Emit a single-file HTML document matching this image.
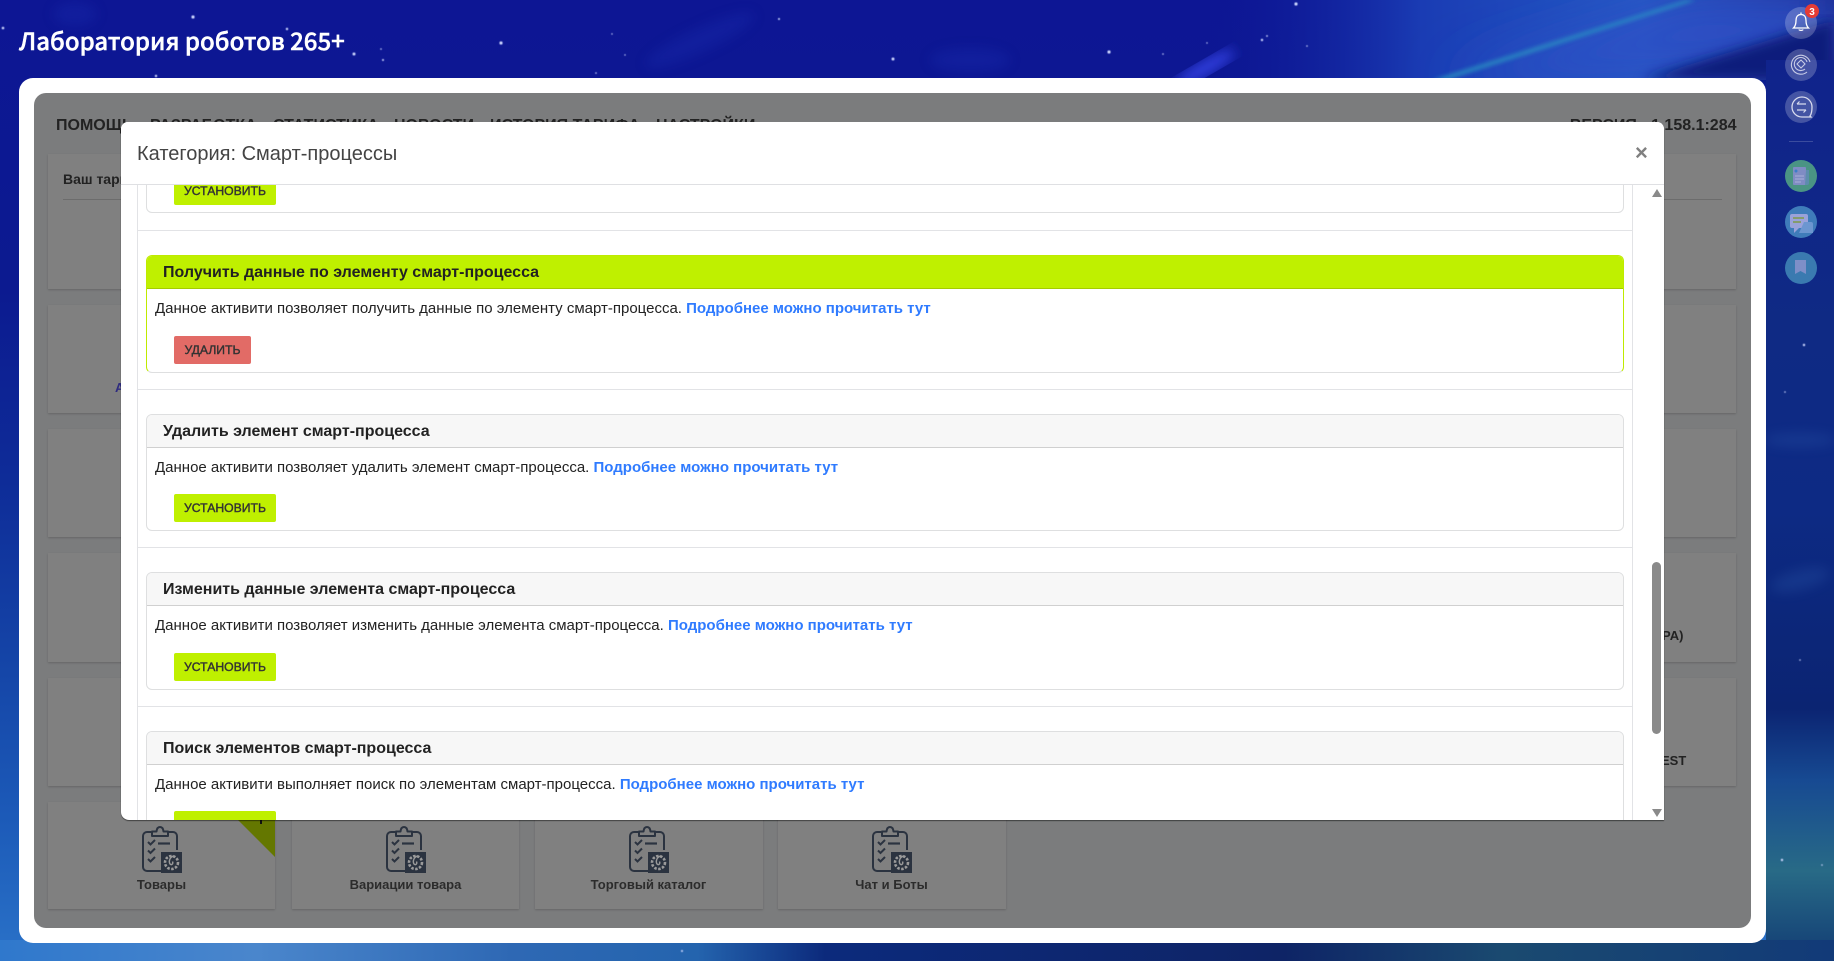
<!DOCTYPE html>
<html><head><meta charset="utf-8"><style>
html,body{margin:0;padding:0;width:1834px;height:961px;overflow:hidden;background:#0c1590;font-family:"Liberation Sans",sans-serif}
.a{position:absolute}
#bg{position:absolute;left:0;top:0}
#title{left:19px;top:22px;font:500 24px "Noto Sans CJK SC","Liberation Sans",sans-serif;color:#fff;white-space:nowrap;line-height:36px;-webkit-text-stroke:.45px #fff}
#panel{left:19px;top:78px;width:1747px;height:865px;background:#fff;border-radius:14px}
#gray{left:34px;top:93px;width:1717px;height:835px;background:#7b7c7d;border-radius:12px;overflow:hidden}
.tile{position:absolute;background:#808080;box-shadow:0 1px 2px rgba(0,0,0,.18)}
.nav{position:absolute;top:117px;font:bold 16px/18px "Liberation Sans",sans-serif;color:#222;white-space:nowrap}
.lab{position:absolute;top:877px;width:227px;text-align:center;font:bold 13px/15px "Liberation Sans",sans-serif;color:#2c2c2c}
#modal{left:121px;top:122px;width:1543px;height:698px;background:#fff;border-radius:7px 7px 0 8px;box-shadow:0 1px 1px rgba(0,0,0,.5);overflow:hidden}
#mt{left:16px;top:17px;font:20px/30px "Liberation Sans",sans-serif;color:#444;white-space:nowrap}
.x{position:absolute;left:1514px;top:16px;font:bold 22px/30px "Liberation Sans",sans-serif;color:#808080}
.ln{position:absolute;background:#e2e3e6}
.card{position:absolute;left:25px;width:1478px;box-sizing:border-box;border:1px solid #dedfe0;border-radius:6px;background:#fff;overflow:hidden}
.card h4{margin:0;height:33px;box-sizing:border-box;background:#f7f7f7;border-bottom:1px solid #d0d0d0;font:bold 16px/33px "Liberation Sans",sans-serif;color:#222;padding-left:16px;white-space:nowrap}
.card.on{border-color:#bfea00 #bfea00 #dedfe0 #bfea00}
.card.on h4{background:#bff000;border-bottom-color:#a4cc00}
.card p{margin:0;position:absolute;left:8px;top:43px;font:15px/20px "Liberation Sans",sans-serif;color:#222;white-space:nowrap}
.card a{color:#2f7bff;font-weight:bold;text-decoration:none}
.btn{position:absolute;left:27px;top:80px;height:28px;width:102px;background:#bff000;border-radius:2px;font:12.2px/28px "Liberation Sans",sans-serif;-webkit-text-stroke:.4px #333;color:#333;text-align:center}
.btn.r{width:77px;background:#e26b66}
.si{position:absolute;left:1785px;width:32px;height:32px;border-radius:16px}
</style></head><body>
<svg id="bg" width="1834" height="961" viewBox="0 0 1834 961">
<defs>
<filter id="b1"><feGaussianBlur stdDeviation="6"/></filter>
<filter id="b2"><feGaussianBlur stdDeviation="25"/></filter>
<filter id="b3"><feGaussianBlur stdDeviation="2"/></filter>
<filter id="b4"><feGaussianBlur stdDeviation=".6"/></filter>
<linearGradient id="g0" x1="0" y1="0" x2="0" y2="1"><stop offset="0" stop-color="#0d1694"/><stop offset=".3" stop-color="#0c1a90"/><stop offset=".5" stop-color="#0e2c98"/><stop offset=".7" stop-color="#1546a8"/><stop offset=".85" stop-color="#1c5ab8"/><stop offset="1" stop-color="#2a72c8"/></linearGradient>
<linearGradient id="g1" x1="0" y1="0" x2="1" y2="0"><stop offset="0" stop-color="#2f78cc"/><stop offset=".14" stop-color="#4a86cc"/><stop offset=".28" stop-color="#2e68b4"/><stop offset=".38" stop-color="#2464ae"/><stop offset=".45" stop-color="#0c2a7c"/><stop offset=".7" stop-color="#0e2466"/><stop offset=".82" stop-color="#1a4a70"/><stop offset="1" stop-color="#123a78"/></linearGradient>
<linearGradient id="g2" x1="0" y1="0" x2="0" y2="1"><stop offset="0" stop-color="#10238c"/><stop offset=".3" stop-color="#0f2a84"/><stop offset=".5" stop-color="#0d2a84"/><stop offset=".72" stop-color="#0b2472"/><stop offset=".8" stop-color="#174a92"/><stop offset=".9" stop-color="#286a86"/><stop offset="1" stop-color="#123c74"/></linearGradient>
<linearGradient id="g3" x1="0" y1="0" x2="1" y2="0"><stop offset="0" stop-color="#0d1694" stop-opacity="0"/><stop offset=".35" stop-color="#1a3cb4"/><stop offset=".7" stop-color="#2458c4"/><stop offset="1" stop-color="#1a2a90"/></linearGradient>
</defs>
<rect width="1834" height="961" fill="url(#g0)"/>
<g fill="#1c33b4" opacity=".3" filter="url(#b1)"><ellipse cx="75" cy="14" rx="22" ry="12"/><ellipse cx="700" cy="40" rx="60" ry="12" transform="rotate(-25 700 40)"/><ellipse cx="970" cy="60" rx="40" ry="12"/></g>
<rect x="1200" y="0" width="634" height="80" fill="url(#g3)"/>
<polygon points="1690,0 1834,0 1834,50 1560,80 1440,80" fill="#2e4fc6" filter="url(#b2)"/>
<polygon points="1834,20 1834,80 1640,80" fill="#0f1f7c" filter="url(#b1)"/>
<polygon points="1432,80 1686,0 1696,0 1446,80" fill="#2aa0c4" filter="url(#b3)" opacity=".75"/>
<ellipse cx="1205" cy="68" rx="34" ry="7" transform="rotate(-30 1205 68)" fill="#3040e0" filter="url(#b1)"/>
<rect x="1766" y="60" width="68" height="901" fill="url(#g2)"/>
<g fill="#3a70c0" opacity=".2" filter="url(#b1)"><ellipse cx="1800" cy="440" rx="36" ry="7"/><ellipse cx="1800" cy="580" rx="30" ry="10" transform="rotate(-15 1800 580)"/></g>
<rect x="0" y="940" width="1834" height="21" fill="url(#g1)"/>
<g fill="#cfd8ff" filter="url(#b4)">
<circle cx="193" cy="17" r="1.6"/><circle cx="3" cy="28" r="1.3"/><circle cx="287" cy="29" r="1.2"/><circle cx="354" cy="54" r="1.5"/><circle cx="381" cy="49" r=".8"/><circle cx="383" cy="60" r="1"/><circle cx="501" cy="43" r="1.6"/><circle cx="612" cy="34" r=".7"/><circle cx="625" cy="55" r=".7"/><circle cx="596" cy="73" r=".8"/><circle cx="779" cy="19" r="1"/><circle cx="893" cy="59" r="1.5"/><circle cx="156" cy="76" r="1.2"/><circle cx="1109" cy="52" r="1.6"/><circle cx="1163" cy="54" r=".8"/><circle cx="1207" cy="43" r=".7"/><circle cx="1262" cy="40" r="1.2"/><circle cx="1267" cy="36" r=".9"/><circle cx="1296" cy="4" r="1.6"/><circle cx="1307" cy="46" r=".8"/><circle cx="1804" cy="345" r="1.2"/><circle cx="1785" cy="392" r=".8"/><circle cx="1800" cy="660" r=".8"/><circle cx="1782" cy="860" r="1.2"/><circle cx="1822" cy="865" r=".8"/><circle cx="682" cy="951" r="1"/>
</g>
</svg>
<div id="title" class="a">Лаборатория роботов 265+</div>

<div id="panel" class="a"></div>
<div id="gray" class="a"></div>

<div class="nav" style="left:56px">ПОМОЩЬ</div>
<div class="nav" style="left:150px">РАЗРАБОТКА</div>
<div class="nav" style="left:273px">СТАТИСТИКА</div>
<div class="nav" style="left:394px">НОВОСТИ</div>
<div class="nav" style="left:490px">ИСТОРИЯ ТАРИФА</div>
<div class="nav" style="left:656px">НАСТРОЙКИ</div>
<div class="nav" style="right:97.5px">ВЕРСИЯ : 1.158.1:284</div>

<div class="tile" style="left:48px;top:154px;width:1688px;height:135px"></div>
<div class="a" style="left:63px;top:172px;font:bold 14px/15px 'Liberation Sans',sans-serif;color:#222">Ваш тариф</div>
<div class="a" style="left:63px;top:199px;width:1659px;height:1px;background:#6c6c6c"></div>

<div class="tile" style="left:48px;top:305px;width:227px;height:108px"></div>
<div class="a" style="left:115px;top:380px;font:bold 13px/15px 'Liberation Sans',sans-serif;color:#2f2c80">А</div>
<div class="tile" style="left:48px;top:429px;width:227px;height:108px"></div>
<div class="tile" style="left:48px;top:553px;width:227px;height:109px"></div>
<div class="tile" style="left:48px;top:678px;width:227px;height:108px"></div>
<div class="tile" style="left:1509px;top:305px;width:227px;height:108px"></div>
<div class="tile" style="left:1509px;top:429px;width:227px;height:108px"></div>
<div class="tile" style="left:1509px;top:553px;width:227px;height:109px"></div>
<div class="tile" style="left:1509px;top:678px;width:227px;height:108px"></div>
<div class="a" style="left:1662px;top:628px;font:bold 13px/15px 'Liberation Sans',sans-serif;color:#222">PA)</div>
<div class="a" style="left:1661px;top:753px;font:bold 13px/15px 'Liberation Sans',sans-serif;color:#222;clip-path:inset(0 0 0 3px)">EST</div>

<svg width="0" height="0" style="position:absolute"><defs>
<g id="ic">
<path d="M9 7H5a4 4 0 0 0-4 4v31a4 4 0 0 0 4 4h16M35 25V11a4 4 0 0 0-4-4h-5" fill="none" stroke="#2b3340" stroke-width="2" transform="translate(1)"/>
<path d="M11 11V6.500h4.500c.3-3 1.700-4.500 3.500-4.500s3.200 1.500 3.500 4.500H27V11z" fill="none" stroke="#2b3340" stroke-width="2" stroke-linejoin="round"/>
<path d="M7 17l2.500 2.500L14 15M7 25.500l2.500 2.500L14 23.500M7 34l2.500 2.500L14 32" fill="none" stroke="#2b3340" stroke-width="2"/>
<path d="M17 18.500h12" stroke="#2b3340" stroke-width="2.200"/>
<rect x="20" y="27" width="21" height="21" fill="#2b3340"/>
<circle cx="30.500" cy="37.500" r="6.500" fill="none" stroke="#9a9a9a" stroke-width="2.600" stroke-dasharray="2.500 1.500"/>
<path d="M32 31c-3.500 2-4.500 5.500-3 8 1.500 1.500 3.500 0 2.500-2.500" fill="none" stroke="#9a9a9a" stroke-width="1.400"/>
</g></defs></svg>

<div class="tile" style="left:48px;top:802px;width:227px;height:107px"></div>
<div class="tile" style="left:292px;top:802px;width:227px;height:107px"></div>
<div class="tile" style="left:535px;top:802px;width:228px;height:107px"></div>
<div class="tile" style="left:778px;top:802px;width:228px;height:107px"></div>
<svg class="a" style="left:238px;top:820px" width="37" height="37"><polygon points="0,0 37,0 37,37" fill="#647700"/><rect x="22" y="0" width="2" height="4" fill="#111"/></svg>
<svg class="a" style="left:141px;top:825px" width="42" height="49"><use href="#ic"/></svg>
<svg class="a" style="left:385px;top:825px" width="42" height="49"><use href="#ic"/></svg>
<svg class="a" style="left:628px;top:825px" width="42" height="49"><use href="#ic"/></svg>
<svg class="a" style="left:871px;top:825px" width="42" height="49"><use href="#ic"/></svg>
<div class="lab" style="left:48px">Товары</div>
<div class="lab" style="left:292px">Вариации товара</div>
<div class="lab" style="left:535px">Торговый каталог</div>
<div class="lab" style="left:778px">Чат и Боты</div>

<div id="modal" class="a">
  <div class="ln" style="left:16px;top:63px;width:1px;height:635px"></div>
  <div class="ln" style="left:1511px;top:63px;width:1px;height:635px"></div>
  <div class="card" style="top:-60px;height:151px"></div>
  <div class="a" style="left:0;top:0;width:1543px;height:62px;background:#fff"></div>
  <div id="mt" class="a">Категория: Смарт-процессы</div>
  <div class="x">×</div>
  <div class="ln" style="left:0;top:62px;width:1543px;height:1px;background:#dfe0e3"></div>
  <div class="btn a" style="left:53px;top:63px;height:20px;line-height:12px;border-radius:0 0 2px 2px">УСТАНОВИТЬ</div>
  <div class="ln" style="left:16px;top:108px;width:1495px;height:1px"></div>
  <div class="card on" style="top:133px;height:118px"><h4>Получить данные по элементу смарт-процесса</h4><p>Данное активити позволяет получить данные по элементу смарт-процесса. <a>Подробнее можно прочитать тут</a></p><div class="btn r">УДАЛИТЬ</div></div>
  <div class="ln" style="left:16px;top:267px;width:1495px;height:1px"></div>
  <div class="card" style="top:292px;height:117px"><h4>Удалить элемент смарт-процесса</h4><p>Данное активити позволяет удалить элемент смарт-процесса. <a>Подробнее можно прочитать тут</a></p><div class="btn" style="top:79px">УСТАНОВИТЬ</div></div>
  <div class="ln" style="left:16px;top:425px;width:1495px;height:1px"></div>
  <div class="card" style="top:450px;height:118px"><h4>Изменить данные элемента смарт-процесса</h4><p>Данное активити позволяет изменить данные элемента смарт-процесса. <a>Подробнее можно прочитать тут</a></p><div class="btn">УСТАНОВИТЬ</div></div>
  <div class="ln" style="left:16px;top:584px;width:1495px;height:1px"></div>
  <div class="card" style="top:609px;height:118px"><h4>Поиск элементов смарт-процесса</h4><p style="top:43px">Данное активити выполняет поиск по элементам смарт-процесса. <a>Подробнее можно прочитать тут</a></p><div class="btn" style="top:79px">&nbsp;</div></div>
  <svg class="a" style="left:1530px;top:66px" width="12" height="632"><polygon points="1,9 11,9 6,1" fill="#8a8a8a"/><polygon points="1,621 11,621 6,629" fill="#8a8a8a"/><rect x="1" y="374" width="9" height="172" rx="4.500" fill="#8a8a8a"/></svg>
</div>

<div class="si" style="top:7px;background:rgba(255,255,255,.22)"></div>
<div class="si" style="top:49px;background:rgba(255,255,255,.22)"></div>
<div class="si" style="top:91px;background:rgba(255,255,255,.22)"></div>
<div class="a" style="left:1789px;top:141px;width:24px;height:1px;background:rgba(255,255,255,.18)"></div>
<div class="si" style="top:160px;background:#4a9484"></div>
<div class="si" style="top:206px;background:#3f7cba"></div>
<div class="si" style="top:252px;background:#3a7ab0"></div>
<svg class="a" style="left:1785px;top:0" width="36" height="290" fill="none" stroke="#fff">
 <path d="M16 14.500c-3.800 0-5 3-5 6 0 4-1 6-2.500 7.500h15c-1.500-1.500-2.500-3.500-2.500-7.500 0-3-1.200-6-5-6z" stroke-width="1.300"/><path d="M16 12.500v2M14 29.500c.3 1.200 3.700 1.200 4 0" stroke-width="1.300"/>
 <g stroke="#c8cce6" stroke-width="1.100"><path d="M25 62a9.500 9.500 0 1 0-3 10"/><path d="M22 62a6.500 6.500 0 1 0-2 7"/><path d="M16 60l4 4-4 4-4-4z"/></g>
 <path d="M25 116c1.500-2 2-4 2-9a10 10 0 1 0-10 10h9z" stroke="#d8dbee" stroke-width="1.300"/><path d="M12 104h9M12 104l2.500-2.500M21 110h-9M21 110l-2.500 2.500" stroke="#d8dbee" stroke-width="1.200"/>
 <rect x="8" y="167" width="13" height="18" rx="1" fill="#7f8cc4" stroke="none"/><path d="M21 170h3v13a2 2 0 0 1-2 2h-2" fill="#5d8cae" stroke="none"/><circle cx="11" cy="171" r="1.500" fill="#3b7dc8" stroke="none"/><path d="M10 176h9M10 179h9M10 182h6" stroke="#a8b0d8" stroke-width="1"/>
 <rect x="5" y="214" width="18" height="14" rx="2" fill="#9aa2da" stroke="none"/><path d="M9 228v5l5-5z" fill="#9aa2da" stroke="none"/><path d="M19 222h7a2 2 0 0 1 2 2v9h-14" fill="#6c96d0" stroke="none"/><path d="M8 218h11" stroke="#7a9a30" stroke-width="1.300"/><path d="M8 222h8" stroke="#7a9a30" stroke-width="1.300"/>
 <path d="M10 260h11v14l-5.500-3-5.500 3z" fill="#7e8fc8" stroke="none"/>
</svg>
<svg class="a" style="left:1805px;top:4px" width="14" height="14"><circle cx="7" cy="7" r="7" fill="#e53b35"/><text x="7" y="11" text-anchor="middle" font-family="Liberation Sans" font-weight="bold" font-size="10" fill="#fff">3</text></svg>
</body></html>
